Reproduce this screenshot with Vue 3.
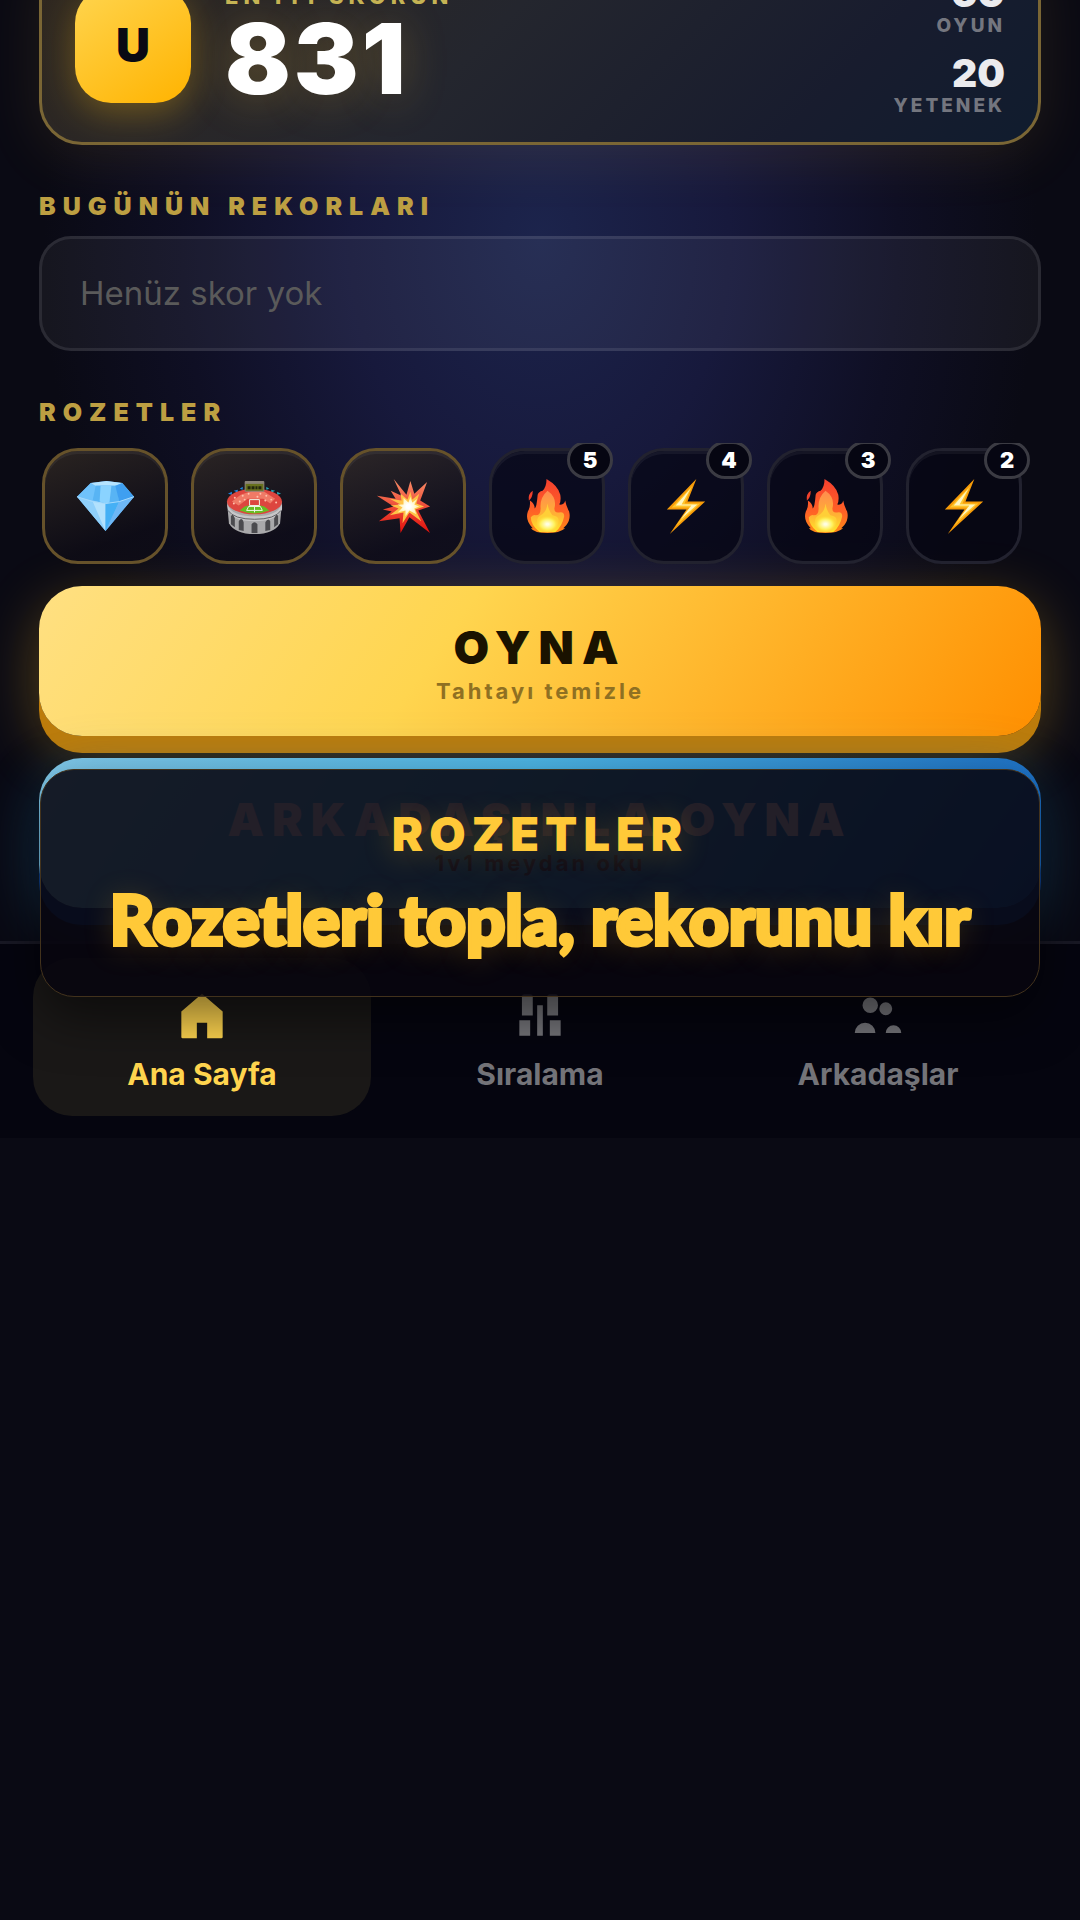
<template>
  <div class="screen">
    <main class="content">
      <section class="profile">
        <div class="avatar">U</div>
        <div class="best">
          <span class="best-label">EN İYİ SKORUN</span>
          <span class="best-score">831</span>
        </div>
        <div class="stats">
          <div v-for="stat in stats" :key="stat.label" class="stat">
            <strong>{{ stat.value }}</strong>
            <span>{{ stat.label }}</span>
          </div>
        </div>
      </section>

      <h2 class="section-title">BUGÜNÜN REKORLARI</h2>
      <p class="empty-box">Henüz skor yok</p>

      <h2 class="section-title">ROZETLER</h2>
      <div class="badges">
        <div
          v-for="(badge, index) in badges"
          :key="index"
          class="badge"
          :class="{ rare: !badge.count }"
        >
          <svg v-if="badge.icon === 'gem'" viewBox="0 0 60 60" aria-hidden="true">
            <defs>
              <linearGradient id="gemSide" x1="0" y1="0" x2="1" y2="1">
                <stop offset="0" stop-color="#2f7fe6" />
                <stop offset="0.5" stop-color="#7fd0ff" />
                <stop offset="1" stop-color="#2a78dc" />
              </linearGradient>
            </defs>
            <path d="M1 20 15 6 31 4 47 6 59 20 30 55Z" fill="url(#gemSide)" />
            <path d="M1 20 15 6 22 9 17 24Z" fill="#6fc2fb" />
            <path d="M15 6 31 4 47 6 41 9H20Z" fill="#b5e4ff" />
            <path d="M20 9h21l3 16-14 2-13-3Z" fill="#58b4f4" />
            <path d="M25 9h11l-2 17-4 1-6-2Z" fill="#8ad3ff" />
            <path d="M47 6 59 20 44 25 40 9Z" fill="#3f9ff0" />
            <path d="M1 20 17 24 30 27 30 55Z" fill="#8fd0fb" />
            <path d="M17 25 30 27 30 55Z" fill="#b2e1fd" />
            <path d="M30 27 44 25 30 55Z" fill="#45b0f5" />
            <path d="M44 25 59 20 30 55Z" fill="#6db7f5" />
            <path d="M1 20 17 25 30 27 44 25 59 20" fill="none" stroke="#a5d9fb" stroke-width="1" />
          </svg>

          <svg v-else-if="badge.icon === 'stadium'" viewBox="0 0 60 60" aria-hidden="true">
            <path d="M3 17 7 15v3ZM9 14l4-1v3ZM15 12l3-2v3Z" fill="#1d86dd" />
            <path d="M57 17l-4-2v3ZM51 14l-4-1v3ZM45 12l-3-2v3Z" fill="#25a6b8" />
            <path d="M2 25h56l-2 22q-6 11-26 11T4 47Z" fill="#a9a9ab" />
            <path d="M2 27q4 13 28 13t28-13v6q-5 12-28 12T3 33Z" fill="#c7c7c9" />
            <path d="M3 34q6 9 27 9t27-9" fill="none" stroke="#5e5e62" stroke-width="1" />
            <ellipse cx="30" cy="25" rx="28" ry="13" fill="#dd463f" />
            <path d="M7 25 16 18 25 15 30 13 40 15 51 22 46 27 39 22H23L14 29Z" fill="#f07a66" />
            <g fill="#ffc0ac">
              <circle cx="10" cy="21" r="1" /><circle cx="15" cy="25" r="1" />
              <circle cx="18" cy="19" r="1" /><circle cx="24" cy="17" r="1" />
              <circle cx="36" cy="17" r="1" /><circle cx="42" cy="19" r="1" />
              <circle cx="47" cy="23" r="1" /><circle cx="52" cy="26" r="1" />
              <circle cx="9" cy="27" r="1" /><circle cx="20" cy="23" r="1" />
              <circle cx="41" cy="24" r="1" /><circle cx="33" cy="20" r="1" />
            </g>
            <path d="M15 34 20 30q10-3 20 0l5 4q-15 6-30 0Z" fill="#67bd23" />
            <path d="M22 34 24 30h12l2 4ZM30 30v6M25 23h10v6H25Z" fill="none" stroke="#eef5e6" stroke-width="1" />
            <rect x="20" y="4" width="20" height="11" rx="1" fill="#8a8377" />
            <rect x="21" y="7" width="18" height="7" fill="#68711d" />
            <path d="M23 11h3M27 11h3M31 11h2M34 11h3" stroke="#23260e" stroke-width="3" />
            <path
              d="M6 48V40q2-4 4 2v9ZM14 54V45q3-5 5 1v9ZM27 57V48q3-4 6 0v9ZM41 55V46q3-5 5-1v9ZM50 51V42q3-6 4-2v8Z"
              fill="#4b4b4f"
            />
          </svg>

          <svg v-else-if="badge.icon === 'burst'" viewBox="0 0 60 60" aria-hidden="true">
            <defs>
              <linearGradient id="burstRed" x1="0" y1="0" x2="0" y2="1">
                <stop offset="0" stop-color="#f98e68" />
                <stop offset="1" stop-color="#e20f0b" />
              </linearGradient>
              <radialGradient id="burstCore">
                <stop offset="0.2" stop-color="#ffffff" />
                <stop offset="1" stop-color="#fff0a0" />
              </radialGradient>
            </defs>
            <path d="M20 2 33 18 37 4 41 17 54 5 47 24 57 30 45 34 57 57 36 41 27 57 26 42 5 45 18 35 9 33 20 30 3 19 22 22 17 14 28 19Z" fill="url(#burstRed)" />
            <path d="M27 17 34 23 37 15 39 23 46 17 43 27 51 30 42 33 48 45 36 36 29 47 30 36 16 39 25 32 17 29 27 28 16 22 28 24Z" fill="#ffc347" />
            <path d="M30 21 35 26 37 20 39 26 44 22 41 28 46 30 41 32 43 38 36 34 32 40 32 34 24 36 29 31 24 28 30 28Z" fill="url(#burstCore)" />
          </svg>

          <svg v-else-if="badge.icon === 'fire'" viewBox="0 0 60 60" aria-hidden="true">
            <defs>
              <linearGradient id="fireOuter" x1="0" y1="0" x2="0" y2="1">
                <stop offset="0" stop-color="#f5402e" />
                <stop offset="0.6" stop-color="#ff6126" />
                <stop offset="1" stop-color="#ff8b17" />
              </linearGradient>
              <linearGradient id="fireInner" x1="0" y1="0" x2="0" y2="1">
                <stop offset="0" stop-color="#ff8b4f" />
                <stop offset="0.6" stop-color="#ffb233" />
                <stop offset="1" stop-color="#ffe628" />
              </linearGradient>
              <radialGradient id="fireCore">
                <stop offset="0.1" stop-color="#fffde0" />
                <stop offset="0.6" stop-color="#fff15b" />
                <stop offset="1" stop-color="#ffd52d" stop-opacity="0" />
              </radialGradient>
            </defs>
            <path d="M15 14q-5 3-4 10 4-3 4-10Z" fill="#f0412c" />
            <path d="M29 2q12 7 14 16 1 6-1 10 5 1 6-4 1 6 4 11 2 8-3 14l-3 3 2 0q-6 5-18 5-13 0-17-5l2 0q-8-8-5-17 3-5 2-11 5 3 5 8 2-1 3-14 1-3 5-4 4-4 4-12Z" fill="url(#fireOuter)" />
            <path d="M30 14q10 7 7 18 0 5 5 4 5-1 5 4-2 10-9 16H22q-9-7-9-15 3-3 5-2 5 0 5-7-1-11 7-18Z" fill="url(#fireInner)" />
            <path d="M30 27q1 7 5 12 8 1 6 8-3 7-7 9h-9q-6-3-6-9 0-6 4-8 6-3 7-12Z" fill="#ffcf37" />
            <ellipse cx="30" cy="48" rx="12" ry="9" fill="url(#fireCore)" />
          </svg>

          <svg v-else viewBox="0 0 60 60" aria-hidden="true">
            <path d="M40 2 10 33H30L13 58 49 25H31Z" fill="#f79b08" />
            <path d="M36 9 15 31H33L19 50 44 27H28Z" fill="#ffc62c" />
            <path d="M34 12 19 29H35L24 43 41 28H25Z" fill="#fff7c2" />
          </svg>
          <span v-if="badge.count" class="count">{{ badge.count }}</span>
        </div>
      </div>

      <button type="button" class="action play">
        <strong>OYNA</strong>
        <span>Tahtayı temizle</span>
      </button>
      <button type="button" class="action versus">
        <strong>ARKADAŞINLA OYNA</strong>
        <span>1v1 meydan oku</span>
      </button>
    </main>

    <nav class="tabs">
      <a
        v-for="tab in tabs"
        :key="tab.label"
        href="#"
        class="tab"
        :class="{ active: tab.label === activeTab }"
        @click.prevent="activeTab = tab.label"
      >
        <svg viewBox="0 0 24 24" fill="currentColor" aria-hidden="true">
          <path :d="tab.path" />
        </svg>
        <span>{{ tab.label }}</span>
      </a>
    </nav>

    <div class="caption">
      <p class="caption-kicker">ROZETLER</p>
      <p class="caption-text">Rozetleri topla, rekorunu kır</p>
    </div>
  </div>
</template>

<script setup>
import { ref } from 'vue'

const activeTab = ref('Ana Sayfa')

const stats = [
  { value: 60, label: 'OYUN' },
  { value: 20, label: 'YETENEK' }
]

const badges = [
  { icon: 'gem' },
  { icon: 'stadium' },
  { icon: 'burst' },
  { icon: 'fire', count: 5 },
  { icon: 'bolt', count: 4 },
  { icon: 'fire', count: 3 },
  { icon: 'bolt', count: 2 }
]

const tabs = [
  {
    label: 'Ana Sayfa',
    path: 'M4 10.6 12 3.8l8 6.8v9.9a.5.5 0 0 1-.5.5H14v-6h-4v6H4.5a.5.5 0 0 1-.5-.5z'
  },
  {
    label: 'Sıralama',
    path: 'M6 4h2.2q1 0 1 1v7.2H5V5q0-1 1-1zM16 4h2q1 0 1 1v7.2h-4.2V5q0-1 1.2-1zM4 14h4.2v6H4zM15.8 14H20v6h-4.2zM10.9 8.2h2.2V20h-2.2z'
  },
  {
    label: 'Arkadaşlar',
    path: 'M9 5.2a3 3 0 1 1 0 6 3 3 0 0 1 0-6zM15 7.1a2.5 2.5 0 1 1 0 5 2.5 2.5 0 0 1 0-5zM3 19a4 4 0 0 1 8 0zM15 19a3 3 0 0 1 6 0z'
  }
]
</script>

<style>
body {
  background: #0a0a14;
}
</style>

<style scoped>
.screen {
  position: relative;
  overflow: hidden;
  color: #fff;
  font-family: Inter, "Liberation Sans", sans-serif;
  background:
    radial-gradient(ellipse 46% 60% at 50% 21%, #1c244c 0%, #17193c 38%, #0f0f24 72%, transparent 100%),
    #0a0a14;
}

.content {
  display: flex;
  flex-direction: column;
  padding: 0 39px 33px;
}

.profile {
  display: flex;
  align-items: center;
  gap: 34px;
  height: 201px;
  box-sizing: border-box;
  margin-top: -56px;
  padding: 0 33px;
  border: 3px solid #7a6635;
  border-radius: 43px;
  background: linear-gradient(135deg, #30281f 0%, #24262e 45%, #181c2e 78%, #101c2e 100%);
  box-shadow: 0 10px 60px rgba(255, 200, 60, 0.1);
}

.avatar {
  display: flex;
  align-items: center;
  justify-content: center;
  width: 116px;
  height: 116px;
  border-radius: 36px;
  color: #090913;
  font-size: 47px;
  font-weight: 900;
  background: linear-gradient(145deg, #ffd54f, #ffb300);
  box-shadow: 0 10px 36px rgba(255, 190, 20, 0.32);
}

.best {
  display: flex;
  flex-direction: column;
  flex: 1;
}

.best-label {
  color: #c5b455;
  font-size: 22px;
  line-height: 28px;
  font-weight: 800;
  letter-spacing: 5px;
}

.best-score {
  font-size: 97px;
  line-height: 98px;
  font-weight: 900;
  letter-spacing: 3px;
  text-shadow: 0 4px 44px rgba(255, 200, 60, 0.25);
}

.stats {
  display: flex;
  flex-direction: column;
  gap: 13px;
  text-align: right;
}

.stat {
  display: flex;
  flex-direction: column;
}

.stat strong {
  color: #ebebee;
  font-size: 39px;
  line-height: 43px;
  font-weight: 900;
}

.stat span {
  color: #74767f;
  font-size: 19px;
  line-height: 24px;
  font-weight: 800;
  letter-spacing: 3px;
}

.section-title {
  margin: 45px 0 14px;
  color: #bd9f42;
  font-size: 25px;
  line-height: 32px;
  font-weight: 900;
  letter-spacing: 7px;
}

.empty-box {
  margin: 0;
  padding: 36px 38px;
  border: 3px solid rgba(255, 255, 255, 0.09);
  border-radius: 32px;
  color: #5a5a5a;
  font-size: 33px;
  line-height: 37px;
  background: rgba(255, 255, 255, 0.05);
}

.empty-box + .section-title {
  margin-bottom: 15px;
}

.badges {
  display: flex;
  gap: 23px;
  overflow: hidden;
  padding: 5px 3px 22px;
}

.badge {
  position: relative;
  display: flex;
  align-items: center;
  justify-content: center;
  flex: none;
  width: 116px;
  height: 116px;
  box-sizing: border-box;
  border: 3px solid #22222f;
  border-radius: 36px;
  background: rgba(6, 6, 18, 0.7);
  box-shadow: inset 0 3px 0 rgba(255, 255, 255, 0.05);
}

.badge.rare {
  width: 126px;
  border-color: #66522a;
  background: linear-gradient(160deg, rgba(50, 42, 36, 0.8), rgba(14, 12, 22, 0.8) 75%);
}

.badge svg {
  width: 59px;
  height: 59px;
}

.count {
  position: absolute;
  top: -10px;
  right: -11px;
  width: 46px;
  height: 38px;
  box-sizing: border-box;
  border: 3px solid #3b3b43;
  border-radius: 19px;
  font-size: 22px;
  line-height: 32px;
  font-weight: 900;
  text-align: center;
  background: #060612;
}

.action {
  display: flex;
  flex-direction: column;
  align-items: center;
  height: 150px;
  padding: 33px 0 0;
  border: 0;
  border-radius: 43px;
  font-family: inherit;
  cursor: pointer;
}

.action strong {
  font-size: 46px;
  line-height: 56px;
  font-weight: 900;
  letter-spacing: 8px;
}

.action span {
  font-size: 22px;
  line-height: 32px;
  font-weight: 700;
  letter-spacing: 3px;
}

.play {
  color: #1a1200;
  background: linear-gradient(125deg, #ffe082 0%, #ffd54f 40%, #ff8f00 100%);
  box-shadow: 0 17px 0 #bd7c0b, 0 17px 60px rgba(255, 190, 30, 0.32);
}

.play span {
  color: #8f7022;
}

.versus {
  margin-top: 22px;
  color: #ffe6f4;
  background: linear-gradient(125deg, #81c9ea 0%, #4db6e6 45%, #1565c0 100%);
  box-shadow: 0 17px 0 #0d3f8a, 0 17px 60px rgba(40, 160, 230, 0.3);
}

.versus span {
  color: #605868;
}

.tabs {
  position: relative;
  display: flex;
  padding: 14px 33px 22px;
  border-top: 3px solid #181824;
  background: #05050f;
}

.tab {
  display: flex;
  flex: 1;
  flex-direction: column;
  align-items: center;
  padding: 26px 0 22px;
  border-radius: 39px;
  color: #747479;
  text-decoration: none;
}

.tab.active {
  color: #ffd54f;
  background: #1a1817;
}

.tab svg {
  width: 62px;
  height: 62px;
}

.tab span {
  margin-top: 9px;
  font-size: 30px;
  line-height: 39px;
  font-weight: 700;
}

.caption {
  position: absolute;
  right: 40px;
  bottom: 141px;
  left: 40px;
  display: flex;
  flex-direction: column;
  align-items: center;
  gap: 4px;
  padding: 34px 0 26px;
  border: 1px solid #42321c;
  border-radius: 34px;
  color: #ffc938;
  text-align: center;
  background: rgba(8, 6, 15, 0.89);
  box-shadow: 0 20px 50px rgba(0, 0, 0, 0.5);
  text-shadow: 0 4px 30px rgba(255, 190, 30, 0.25);
}

.caption p {
  margin: 0;
}

.caption-kicker {
  font-size: 47px;
  line-height: 60px;
  font-weight: 900;
  letter-spacing: 6px;
}

.caption-text {
  font-family: Lato, Inter, sans-serif;
  font-size: 69px;
  line-height: 102px;
  font-weight: 900;
  -webkit-text-stroke: 4px #ffc938;
  stroke-linejoin: round;
}
</style>
